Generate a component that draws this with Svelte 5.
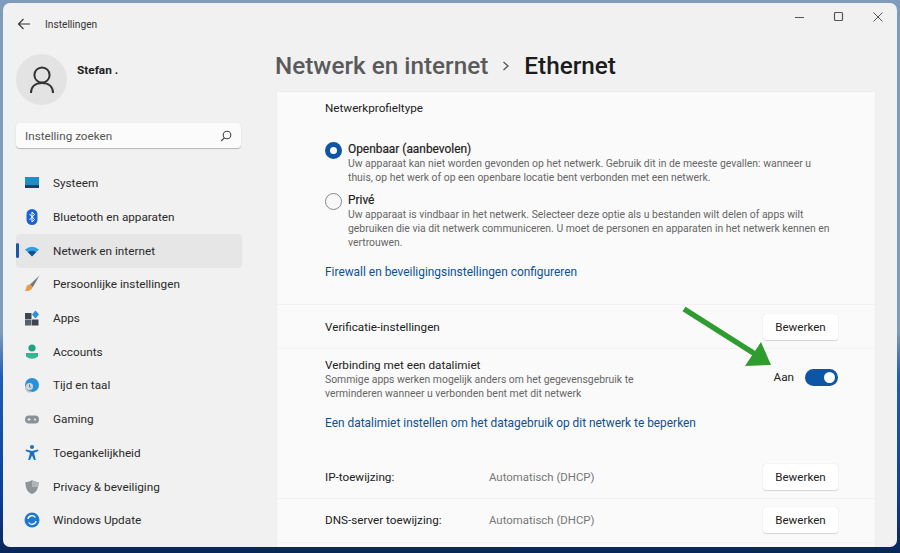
<script>
    const navItems = [
        { id: 'system', label: 'Systeem' },
        { id: 'bluetooth', label: 'Bluetooth en apparaten' },
        { id: 'network', label: 'Netwerk en internet', active: true },
        { id: 'brush', label: 'Persoonlijke instellingen' },
        { id: 'apps', label: 'Apps' },
        { id: 'accounts', label: 'Accounts' },
        { id: 'time', label: 'Tijd en taal' },
        { id: 'gaming', label: 'Gaming' },
        { id: 'access', label: 'Toegankelijkheid' },
        { id: 'privacy', label: 'Privacy & beveiliging' },
        { id: 'update', label: 'Windows Update' }
    ];
</script>

<div class="desktop">
    <div class="window">
        <aside class="sidebar">
            <div class="titlebar">
                <svg class="back" width="14" height="12" viewBox="0 0 14 12" fill="none" stroke="#333" stroke-width="1.1">
                    <path d="M13 6H1.5M6.5 1 1.5 6l5 5" />
                </svg>
                <span>Instellingen</span>
            </div>

            <div class="user">
                <div class="avatar">
                    <svg width="26" height="28" viewBox="0 0 26 28" fill="none" stroke="#333" stroke-width="2">
                        <circle cx="13" cy="9" r="7.6" />
                        <path d="M2 27c0-6 4-10 11-10s11 4 11 10" />
                    </svg>
                </div>
                <strong>Stefan .</strong>
            </div>

            <div class="search">
                <span>Instelling zoeken</span>
                <svg width="12" height="12" viewBox="0 0 12 12" fill="none" stroke="#444" stroke-width="1.1">
                    <circle cx="7" cy="5" r="3.8" />
                    <path d="M4.4 7.8 1.2 11" />
                </svg>
            </div>

            <nav>
                {#each navItems as item}
                    <div class="nav-item" class:active={item.active}>
                        <svg class="nav-icon" width="20" height="20" viewBox="0 0 20 20">
                            {#if item.id === 'system'}
                                <rect x="3" y="4" width="14" height="10" fill="#1d8fc4" />
                                <rect x="3" y="12" width="14" height="3" fill="#17406e" />
                            {:else if item.id === 'bluetooth'}
                                <rect x="4.5" y="2" width="11" height="16" rx="5.5" fill="#1a62d6" />
                                <path d="M7.5 7 12.5 12.5 10 15V5l2.500 2.500L7.500 13" fill="none" stroke="#fff" stroke-width="1" />
                            {:else if item.id === 'network'}
                                <path d="M3 8.500Q10 3 17 8.500L14.500 11Q10 8 5.500 11Z" fill="#2aa1e0" />
                                <path d="M5.500 11Q10 8 14.500 11L10 15.500Z" fill="#0f4f9c" />
                            {:else if item.id === 'brush'}
                                <path d="M17.500 1.500 8 10.500l2.800 2.800Z" fill="#77797d" />
                                <path d="M8 10.500c-2.500 0-3.500 1.500-3.800 3.500-.1 1-.7 2-1.700 2.800 3.500.6 7.500-.5 8.300-3.500Z" fill="#e79a45" />
                            {:else if item.id === 'apps'}
                                <rect x="3" y="5" width="6.500" height="6" fill="#3f4650" />
                                <rect x="3" y="11.500" width="6.500" height="6" fill="#59616b" />
                                <rect x="10" y="11.500" width="6.500" height="6" fill="#3f4650" />
                                <path d="M13.500 2.500 17 6.500l-3.500 4-3.500-4Z" fill="#2b8fdc" />
                            {:else if item.id === 'accounts'}
                                <circle cx="10" cy="6" r="3.600" fill="#1ea37c" />
                                <path d="M4 11h12v3.500Q10 19 4 14.500Z" fill="#35b592" />
                            {:else if item.id === 'time'}
                                <circle cx="10" cy="10" r="7" fill="#2a90d8" />
                                <path d="M3.500 11a4.500 4.500 0 0 0 6.500 5.800A7 7 0 0 1 3.500 11Z" fill="#c5cdd3" />
                                <circle cx="7.500" cy="11.500" r="3.500" fill="#cfd6db" />
                                <path d="M7.500 9.500v2.200l1.500.8" fill="none" stroke="#4a5763" stroke-width=".8" />
                            {:else if item.id === 'gaming'}
                                <rect x="3" y="6.500" width="14" height="8" rx="4" fill="#8b9198" />
                                <path d="M5.500 10.500h3M7 9v3" stroke="#eee" stroke-width="1" />
                                <circle cx="13" cy="10.500" r="1" fill="#eee" />
                            {:else if item.id === 'access'}
                                <circle cx="10" cy="4" r="2" fill="#1573c4" />
                                <path d="M4 6.500 10 8l6-1.500.5 1.500-4.500 1.800 1.800 7.200h-1.800L10 12.500 8 17H6.200L8 9.800 3.500 8Z" fill="#1573c4" />
                            {:else if item.id === 'privacy'}
                                <path d="M10 3c2 1.500 4 2 6.500 2 0 6-1.500 10-6.500 12C5 15 3.500 11 3.500 5 6 5 8 4.500 10 3Z" fill="#8f9499" />
                                <path d="M10 3c2 1.500 4 2 6.500 2 0 2-.2 3.500-.5 5H10Z" fill="#b0b4b8" />
                            {:else if item.id === 'update'}
                                <circle cx="10" cy="10" r="7.500" fill="#1f78cf" />
                                <path d="M6 9a4 4 0 0 1 7.300-1.500M14 11a4 4 0 0 1-7.300 1.500" fill="none" stroke="#fff" stroke-width="1.300" />
                            {/if}
                        </svg>
                        <span>{item.label}</span>
                    </div>
                {/each}
            </nav>
        </aside>

        <main>
            <header>
                <h1><span class="crumb">Netwerk en internet</span><svg width="10" height="12" viewBox="0 0 10 12" fill="none" stroke="#555" stroke-width="1.300"><path d="M2.500 2 7 6l-4.500 4" /></svg><span>Ethernet</span></h1>
                <div class="controls">
                    <svg width="12" height="12" viewBox="0 0 12 12" fill="none" stroke="#555" stroke-width="1"><path d="M1 6.500h9" /></svg>
                    <svg width="12" height="12" viewBox="0 0 12 12" fill="none" stroke="#555" stroke-width="1.200"><rect x="1.500" y="1.500" width="8" height="8" rx="1" /></svg>
                    <svg width="12" height="12" viewBox="0 0 12 12" fill="none" stroke="#555" stroke-width="1"><path d="M1.500 1.500l9 9M10.500 1.500l-9 9" /></svg>
                </div>
            </header>

            <section class="card">
                <div class="profile">
                    <div class="label">Netwerkprofieltype</div>

                    <div class="option first">
                        <span class="radio on"></span>
                        <div>
                            <div class="option-title">Openbaar (aanbevolen)</div>
                            <p>Uw apparaat kan niet worden gevonden op het netwerk. Gebruik dit in de meeste gevallen: wanneer u<br />thuis, op het werk of op een openbare locatie bent verbonden met een netwerk.</p>
                        </div>
                    </div>

                    <div class="option">
                        <span class="radio"></span>
                        <div>
                            <div class="option-title">Privé</div>
                            <p>Uw apparaat is vindbaar in het netwerk. Selecteer deze optie als u bestanden wilt delen of apps wilt<br />gebruiken die via dit netwerk communiceren. U moet de personen en apparaten in het netwerk kennen en<br />vertrouwen.</p>
                        </div>
                    </div>

                    <div class="link profile-link">Firewall en beveiligingsinstellingen configureren</div>
                </div>

                <div class="row verify">
                    <span>Verificatie-instellingen</span>
                    <button>Bewerken</button>
                </div>

                <div class="metered">
                    <div class="metered-top">
                        <div>
                            <div class="label">Verbinding met een datalimiet</div>
                            <p>Sommige apps werken mogelijk anders om het gegevensgebruik te<br />verminderen wanneer u verbonden bent met dit netwerk</p>
                        </div>
                        <div class="toggle-wrap">
                            <span>Aan</span>
                            <span class="toggle"><span class="knob"></span></span>
                        </div>
                    </div>
                    <div class="link">Een datalimiet instellen om het datagebruik op dit netwerk te beperken</div>
                </div>

                <div class="row ip">
                    <span class="key">IP-toewijzing:</span>
                    <span class="value">Automatisch (DHCP)</span>
                    <button>Bewerken</button>
                </div>
                <div class="row dns">
                    <span class="key">DNS-server toewijzing:</span>
                    <span class="value">Automatisch (DHCP)</span>
                    <button>Bewerken</button>
                </div>
            </section>

            <svg class="arrow" width="100" height="70" viewBox="0 0 100 70">
                <path d="M5 2 76 47" stroke="#2e9c2e" stroke-width="5.500" fill="none" />
                <path d="M82 35 92 58 66 59Z" fill="#2e9c2e" />
            </svg>
        </main>
    </div>
</div>

<style>
    :global(body) {
        margin: 0;
    }

    .desktop {
        width: 900px;
        height: 553px;
        padding: 3px 3px 6px 3px;
        box-sizing: border-box;
        overflow: hidden;
        background: linear-gradient(180deg, #7f9cbc 0%, #7f9cbc 60%, #1d5fb4 68%, #0a3f98 90%, #0a2558 100%);
        font-family: Roboto, "Noto Sans", sans-serif;
        color: #222;
    }

    .window {
        position: relative;
        display: flex;
        height: 100%;
        background: #f1f1f1;
        border-radius: 7px;
        overflow: hidden;
    }

    .sidebar {
        width: 272px;
        flex-shrink: 0;
        padding: 0 0 0 13px;
        box-sizing: border-box;
    }

    .titlebar {
        display: flex;
        align-items: center;
        gap: 14px;
        height: 42px;
        padding-left: 1px;
        font-size: 10.200px;
        color: #333;
    }

    .user {
        display: flex;
        gap: 10px;
        margin-top: 9px;
    }

    .avatar {
        display: flex;
        align-items: center;
        justify-content: center;
        width: 51px;
        height: 51px;
        border-radius: 50%;
        background: #e3e3e3;
    }

    .user strong {
        margin-top: 9px;
        font-size: 11.800px;
        font-weight: 700;
    }

    .search {
        display: flex;
        align-items: center;
        justify-content: space-between;
        width: 225px;
        height: 25px;
        margin-top: 18px;
        padding: 0 9px;
        box-sizing: border-box;
        background: #fbfbfb;
        border-radius: 4px;
        box-shadow: 0 1px 1px #b5b5b5, 0 0 1px #ddd;
        font-size: 11.700px;
        color: #555;
    }

    nav {
        margin-top: 18.500px;
    }

    .nav-item {
        position: relative;
        display: flex;
        align-items: center;
        gap: 11px;
        width: 226px;
        height: 33.700px;
        padding-left: 6px;
        box-sizing: border-box;
        border-radius: 4px;
        font-size: 11.750px;
        color: #2a2a2a;
    }

    .nav-item.active {
        background: #e6e6e6;
    }

    .nav-item.active::before {
        content: "";
        position: absolute;
        left: 0;
        top: 9px;
        width: 2.500px;
        height: 15px;
        border-radius: 2px;
        background: #1a57a8;
    }

    main {
        position: relative;
        flex: 1;
        min-width: 0;
        padding-right: 22px;
    }

    header {
        position: relative;
        height: 89px;
    }

    h1 {
        display: flex;
        align-items: center;
        gap: 13px;
        margin: 0;
        padding-top: 45px;
        font-size: 24.300px;
        font-weight: 500;
        line-height: 36px;
        color: #1c1c1c;
    }

    .crumb {
        color: #5a5a5a;
    }

    .controls {
        position: absolute;
        top: 8px;
        right: -8.500px;
        display: flex;
        gap: 27px;
    }

    .card {
        margin-left: 2px;
        height: 456px;
        background: #fafafa;
        box-shadow: 0 0 1px #ddd;
        font-size: 11.700px;
        overflow: hidden;
    }

    .profile {
        padding: 7px 40px 0 48px;
        height: 213px;
        box-sizing: border-box;
        border-bottom: 1px solid #f2f2f2;
    }

    .label {
        font-size: 11.700px;
        line-height: 16px;
    }

    .profile .label {
        line-height: 18px;
    }

    .option {
        display: flex;
        gap: 6px;
        margin-top: 8px;
    }

    .option.first {
        margin-top: 25px;
    }

    .option-title {
        font-size: 11.900px;
        font-weight: 400;
        -webkit-text-stroke: 0.2px #222;
        line-height: 15px;
    }

    p {
        margin: 0;
        font-size: 10.400px;
        line-height: 14px;
        color: #666;
    }

    .radio {
        flex-shrink: 0;
        width: 17px;
        height: 17px;
        border-radius: 50%;
        border: 1px solid #888;
        box-sizing: border-box;
        background: #f8f8f8;
    }

    .radio.on {
        border: 5px solid #0f55a5;
        background: #fff;
    }

    .link {
        font-size: 11.900px;
        font-weight: 400;
        line-height: 16px;
        color: #0f5190;
    }

    .profile-link {
        margin-top: 14px;
    }

    .row {
        display: flex;
        align-items: center;
        padding: 0 37px 0 48px;
        border-bottom: 1px solid #f2f2f2;
    }

    .verify {
        justify-content: space-between;
        height: 43px;
    }

    .metered {
        height: 107px;
        padding: 8px 37px 0 48px;
        box-sizing: border-box;
    }

    .metered-top {
        display: flex;
        justify-content: space-between;
        align-items: center;
        margin-bottom: 14px;
    }

    .toggle-wrap {
        display: flex;
        align-items: center;
        gap: 11px;
        margin-top: -4px;
    }

    .toggle {
        display: flex;
        align-items: center;
        justify-content: flex-end;
        width: 33px;
        height: 17px;
        padding-right: 3px;
        box-sizing: border-box;
        border-radius: 9px;
        background: #0f55a5;
    }

    .knob {
        width: 11px;
        height: 11px;
        border-radius: 50%;
        background: #fff;
    }

    .ip {
        height: 41.500px;
    }

    .dns {
        height: 43px;
    }

    .key {
        width: 164px;
    }

    .value {
        flex: 1;
        font-size: 11.400px;
        color: #777;
    }

    button {
        width: 75px;
        height: 26px;
        padding: 0;
        border: none;
        border-radius: 3px;
        background: #fff;
        box-shadow: 0 1px 1px #d5d5d5, 0 0 1px #ccc;
        font: inherit;
        font-size: 11.600px;
        color: #222;
    }

    .arrow {
        position: absolute;
        left: 404px;
        top: 304px;
    }
</style>
